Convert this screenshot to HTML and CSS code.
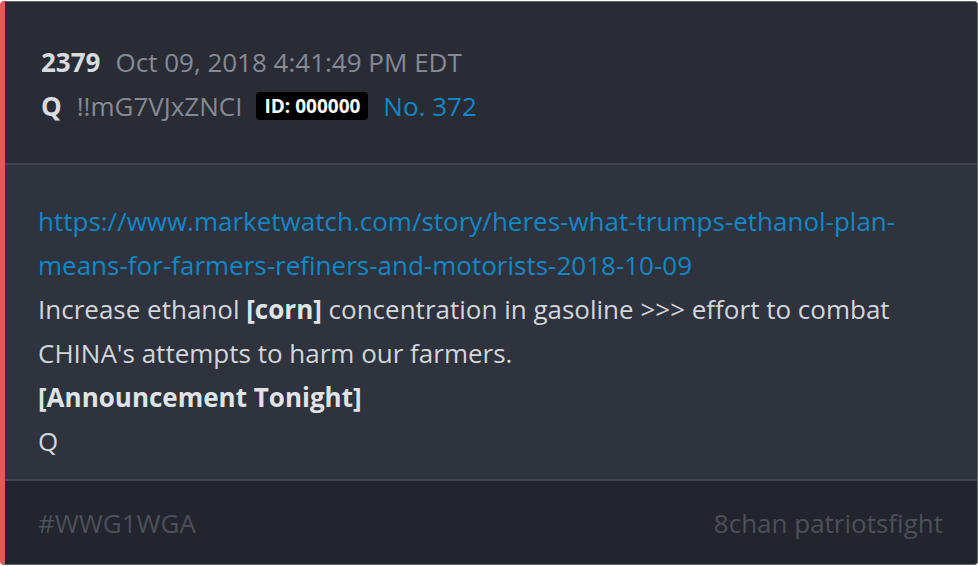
FILE: index.html
```html
<!DOCTYPE html>
<html>
<head>
<meta charset="utf-8">
<link rel="stylesheet" href="styles.css">
</head>
<body>
<div class="card">
  <div class="head">
    <div class="row"><span class="num">2379</span><span class="date">Oct 09, 2018 4:41:49 PM EDT</span></div>
    <div class="row"><span class="name">Q</span><span class="trip">!!mG7VJxZNCI</span><span class="id">ID: 000000</span><a class="no">No. 372</a></div>
  </div>
  <div class="body">
    <a class="link">https://www.marketwatch.com/story/heres-what-trumps-ethanol-plan-means-for-farmers-refiners-and-motorists-2018-10-09</a>
    <div>Increase ethanol <b>[corn]</b> concentration in gasoline &gt;&gt;&gt; effort to combat CHINA's attempts to harm our farmers.</div>
    <div><b>[Announcement Tonight]</b></div>
    <div>Q</div>
  </div>
  <div class="foot">
    <span>#WWG1WGA</span><span>8chan patriotsfight</span>
  </div>
</div>
</body>
</html>
```
FILE: styles.css
```css
html, body { margin: 0; padding: 0; background: #ffffff; }
body { font-family: "Open Sans", sans-serif; font-size: 26px; }
.card {
  margin: 1px 0 0 0;
  height: 564px;
  box-sizing: border-box;
  border: 1px solid #5f636d;
  border-left: 5px solid #e05a5c;
  border-radius: 4px;
  overflow: hidden;
  display: flex;
  flex-direction: column;
  background: #2e333d;
}
.head {
  background: #292c35;
  padding: 38px 33px 35px;
  border-bottom: 2px solid #42464f;
}
.row { display: flex; align-items: center; height: 44px; }
.num { font-weight: 700; color: #d9dbe0; margin: 0 15px 0 3px; }
.date { color: #858a95; }
.name { font-weight: 700; color: #d9dbe0; margin: 0 15px 0 3px; }
.trip { color: #858a95; margin-right: 14px; }
.id {
  background: #000;
  color: #fff;
  font-weight: 700;
  font-size: 19px;
  line-height: 28px;
  padding: 0 8px;
  border-radius: 4px;
  margin-right: 15px;
}
.no { color: #0a88c8; }
.body {
  flex: 1;
  padding: 34px 33px 0;
  line-height: 44px;
  color: #d3d6dc;
}
.body b { color: #e1e3e7; }
.link { color: #0a88c8; display: block; }
.foot {
  background: #22252d;
  border-top: 2px solid #42464f;
  height: 85px;
  box-sizing: border-box;
  padding: 0 34px 0 33px;
  display: flex;
  align-items: center;
  justify-content: space-between;
  color: #4b505a;
}
```
